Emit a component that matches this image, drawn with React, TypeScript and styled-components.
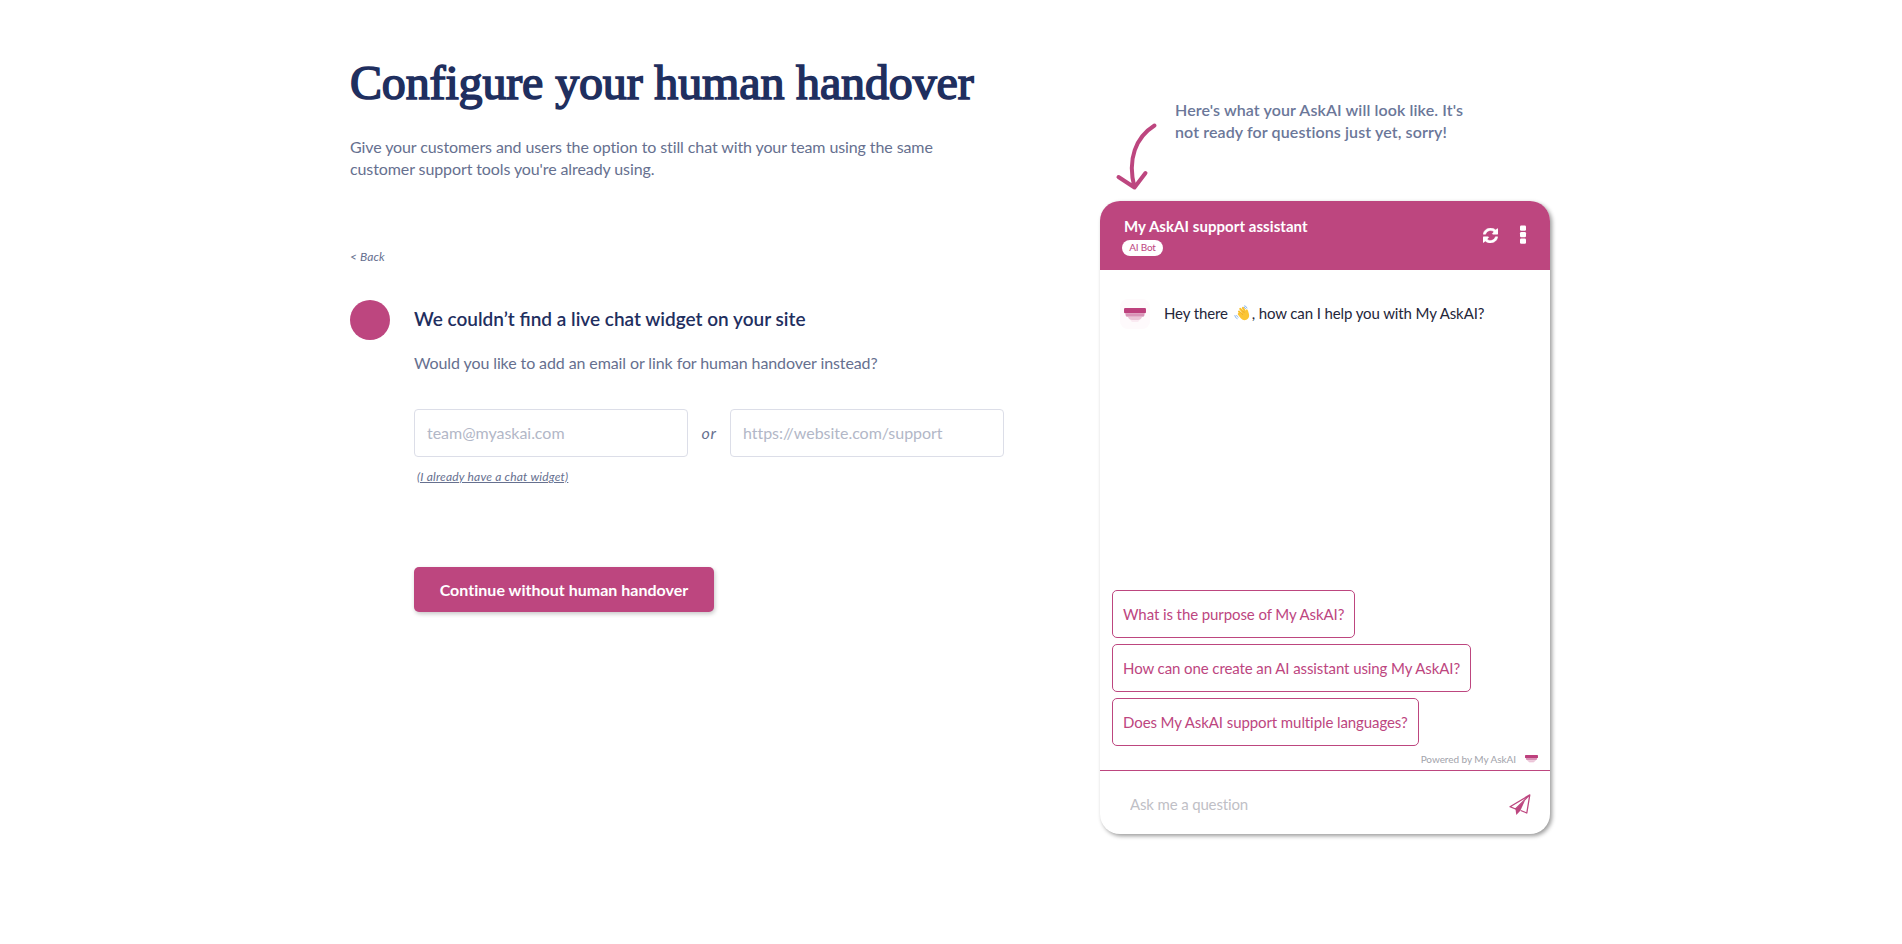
import React from 'react';
import styled, { createGlobalStyle } from 'styled-components';

const pink = '#bd467f';
const navy = '#1f2f5f';
const slate = '#66708f';

const GlobalStyle = createGlobalStyle`
  * { box-sizing: border-box; }
  body {
    margin: 0;
    background: #fff;
    font-family: Lato, "Liberation Sans", sans-serif;
    font-variant-ligatures: none;
    color: ${slate};
  }
  h1, h2, p { margin: 0; }
  button, input { font-family: inherit; font-variant-ligatures: none; }
`;

const Page = styled.main`
  display: flex;
  justify-content: flex-start;
  gap: 96px;
  height: 944px;
  padding: 0 0 0 350px;
  overflow: hidden;
`;

const Setup = styled.section`
  width: 654px;
  padding-top: 52px;
`;

const Title = styled.h1`
  font: 400 48px/62px "Liberation Serif", serif;
  color: ${navy};
  letter-spacing: -0.15px;
  white-space: nowrap;
  -webkit-text-stroke: 1.6px ${navy};
`;

const Lead = styled.p`
  width: 620px;
  margin-top: 22px;
  font-size: 16px;
  line-height: 22px;
  letter-spacing: -0.1px;
`;

const Back = styled.a`
  display: block;
  margin: 68px 0 0 0;
  font-size: 12px;
  line-height: 18px;
  letter-spacing: 0.1px;
  font-style: italic;
`;

const Step = styled.div`
  display: flex;
  gap: 24px;
  margin-top: 34px;
`;

const Dot = styled.div`
  flex: none;
  width: 40px;
  height: 40px;
  border-radius: 50%;
  background: ${pink};
`;

const StepBody = styled.div`
  width: 590px;
`;

const StepTitle = styled.h2`
  font-size: 19px;
  line-height: 38px;
  padding-bottom: 2px;
  font-weight: 600;
  font-variant-ligatures: normal;
  color: ${navy};
`;

const Question = styled.p`
  margin-top: 12px;
  font-size: 16px;
  line-height: 22px;
  letter-spacing: -0.1px;
`;

const Fields = styled.div`
  display: flex;
  justify-content: space-between;
  align-items: center;
  margin-top: 35px;
`;

const Field = styled.input`
  width: 274px;
  height: 48px;
  padding: 0 12px 1px;
  border: 1px solid #dcdee8;
  border-radius: 4px;
  font-size: 16px;
  letter-spacing: -0.03px;
  &::placeholder { color: #b2b7c7; }
`;

const Or = styled.span`
  padding-bottom: 2px;
  font-size: 16px;
  letter-spacing: 0.6px;
  font-style: italic;
`;

const WidgetLink = styled.a`
  display: block;
  margin: 11px 0 0 3px;
  font-size: 12px;
  line-height: 18px;
  letter-spacing: 0.2px;
  font-style: italic;
  text-decoration: underline;
`;

const Continue = styled.button`
  display: block;
  width: 300px;
  height: 45px;
  margin-top: 81px;
  border: 0;
  border-radius: 5px;
  background: ${pink};
  color: #fff;
  font-size: 16px;
  font-weight: 700;
  letter-spacing: 0.02px;
  box-shadow: 1px 2px 4px rgba(0, 0, 0, 0.22);
`;

const Preview = styled.section`
  width: 450px;
  padding-top: 99px;
`;

const Hint = styled.div`
  display: flex;
  height: 102px;
`;

const HintText = styled.p`
  font-size: 16px;
  line-height: 22px;
  font-weight: 600;
  letter-spacing: 0.11px;
  white-space: nowrap;
  color: #6b7799;
`;

const Arrow = styled.svg`
  flex: none;
  width: 75px;
  height: 102px;
`;

const Chat = styled.div`
  display: flex;
  flex-direction: column;
  height: 633px;
  border-radius: 20px;
  overflow: hidden;
  background: #fff;
  box-shadow: 2px 2px 4px rgba(0, 0, 0, 0.4);
`;

const ChatHeader = styled.header`
  display: flex;
  justify-content: space-between;
  height: 69px;
  padding: 14px 21px 0 22px;
  background: ${pink};
  color: #fff;
`;

const BotName = styled.div`
  padding-left: 2px;
  font-size: 15px;
  line-height: 22px;
  font-weight: 700;
  letter-spacing: 0.06px;
`;

const Badge = styled.div`
  width: 41px;
  height: 16px;
  margin-top: 3px;
  border-radius: 8px;
  background: #fff;
  color: ${pink};
  font-size: 10px;
  line-height: 15px;
  letter-spacing: -0.2px;
  text-align: center;
`;

const Actions = styled.div`
  display: flex;
  align-items: center;
  gap: 19px;
  height: 40px;
`;

const Messages = styled.div`
  flex: 1;
  padding: 29px 20px;
`;

const Message = styled.div`
  display: flex;
  align-items: center;
  gap: 14px;
  color: #24263a;
  font-size: 15px;
  line-height: 24px;
`;

const Avatar = styled.div`
  display: flex;
  align-items: center;
  justify-content: center;
  width: 30px;
  height: 30px;
  padding-top: 2px;
  border-radius: 8px;
  background: #fefafc;
`;

const Greeting = styled.p`
  display: flex;
  align-items: center;
  white-space: pre;
  padding-bottom: 2px;
  letter-spacing: -0.11px;
`;

const Suggestions = styled.div`
  display: flex;
  flex-direction: column;
  align-items: flex-start;
  gap: 6px;
  padding: 0 12px;
`;

const Suggestion = styled.button`
  height: 48px;
  padding: 0 10px;
  border: 1px solid ${pink};
  border-radius: 5px;
  background: #fff;
  color: ${pink};
  font-size: 15px;
  letter-spacing: -0.09px;
`;

const Powered = styled.div`
  display: flex;
  justify-content: flex-end;
  align-items: center;
  gap: 9px;
  height: 24px;
  padding: 2px 12px 0 0;
  color: #a2a3ab;
  font-size: 10px;
  letter-spacing: -0.05px;
`;

const Composer = styled.div`
  display: flex;
  align-items: center;
  justify-content: space-between;
  height: 64px;
  padding: 4px 19px 0 30px;
  border-top: 1px solid ${pink};
`;

const Ask = styled.input`
  width: 300px;
  padding: 0 0 2px;
  border: 0;
  font-size: 15px;
  letter-spacing: -0.15px;
  &::placeholder { color: #bfc0c6; }
`;

const LogoMark = ({ width }: { width: number }) => (
  <svg width={width} height={width * 0.68} viewBox="0 0 22 15">
    <rect x="0" y="0" width="22" height="5.2" rx="1" fill="#bd407d" />
    <path d="M1.500 5.200H20.500V7Q20.500 8.900 18 8.900H4Q1.500 8.900 1.500 7Z" fill="#d993b7" />
    <path d="M4 8.900H18Q17.500 12 14 12H8Q4.500 12 4 8.900Z" fill="#ebc4d7" />
    <path d="M6.500 12H15.500Q14 15 11 15Q8 15 6.500 12Z" fill="#faeaf2" />
  </svg>
);

const Refresh = () => (
  <svg width="15" height="15" viewBox="128 128 1536 1536" fill="#fff" stroke="#fff" strokeWidth="50">
    <path d="M1639 1056q0 5-1 7-64 268-268 434.500t-478 166.500q-146 0-282.500-55t-243.500-157l-129 129q-19 19-45 19t-45-19-19-45v-448q0-26 19-45t45-19h448q26 0 45 19t19 45-19 45l-137 137q71 66 161 102t187 36q134 0 250-65t186-179q11-17 53-117 8-23 30-23h192q13 0 22.500 9.500t9.500 22.500zm25-800v448q0 26-19 45t-45 19h-448q-26 0-45-19t-19-45 19-45l138-138q-148-137-349-137-134 0-250 65t-186 179q-11 17-53 117-8 23-30 23h-199q-13 0-22.500-9.500t-9.500-22.500v-7q65-268 270-434.500t480-166.500q146 0 284 55.500t245 156.500l130-129q19-19 45-19t45 19 19 45z" />
  </svg>
);

const Dots = () => (
  <svg width="12" height="20" viewBox="0 0 12 20" fill="#fff">
    {[0.5, 7, 13.5].map((y) => (
      <rect key={y} x="3" y={y} width="6" height="5.2" rx="1.2" />
    ))}
  </svg>
);

const Wave = () => (
  <svg width="20" height="16" viewBox="-2 0 20 16">
    <g stroke="#f9c02e" strokeWidth="2.1" strokeLinecap="round">
      <path d="M5 6.5L9 11M6.300 3.800L10.500 9M8.900 2.900L12 8M4.800 9L8 12" />
    </g>
    <path d="M6 8L11.500 6.500L12.300 4.200Q13.800 4.100 14 5.800L15 9.200Q15.800 13 12.400 14.800Q9.300 16 7 13.400L4.600 10.500Z" fill="#fbc535" />
    <path d="M8.300 5.500L10.500 8M6.800 7.500L9 10" stroke="#e3952b" strokeWidth=".5" />
    <path d="M10.500 .8Q12.500 1 13 3M10.200 2.200Q11.200 2.500 11.600 3.700M.8 10.500Q1 13 3.200 13.700M2.600 10.500Q3 11.800 4.100 12.200" fill="none" stroke="#8db8ef" strokeWidth="1" strokeLinecap="round" />
  </svg>
);

const Send = () => (
  <svg width="22" height="22" viewBox="0 0 22 22" fill="none" stroke={pink} strokeWidth="1.300" strokeLinejoin="round">
    <path d="M20.800 .9L1 12.700L6.500 15L20.800 .9L17.800 19L11.700 16.500" />
    <path d="M6.500 15L16 6.500L11.300 16.700L7.300 21Z" fill={pink} stroke="none" />
  </svg>
);

const suggestions = [
  'What is the purpose of My AskAI?',
  'How can one create an AI assistant using My AskAI?',
  'Does My AskAI support multiple languages?',
];

export default function App() {
  return (
    <Page>
      <GlobalStyle />
      <Setup>
        <Title>Configure your human handover</Title>
        <Lead>
          Give your customers and users the option to still chat with your team using the same
          <br />
          customer support tools you're already using.
        </Lead>
        <Back>&lt; Back</Back>
        <Step>
          <Dot />
          <StepBody>
            <StepTitle>We couldn’t find a live chat widget on your site</StepTitle>
            <Question>Would you like to add an email or link for human handover instead?</Question>
            <Fields>
              <Field placeholder="team@myaskai.com" />
              <Or>or</Or>
              <Field placeholder="https://website.com/support" />
            </Fields>
            <WidgetLink>(I already have a chat widget)</WidgetLink>
            <Continue>Continue without human handover</Continue>
          </StepBody>
        </Step>
      </Setup>
      <Preview>
        <Hint>
          <Arrow viewBox="0 0 75 102" fill="none" stroke={pink} strokeWidth="4" strokeLinecap="round" strokeLinejoin="round">
            <path d="M54.500 26.500C36 38 27 60 34.500 88.500M18.500 78L34.500 88.500L45.500 74" />
          </Arrow>
          <HintText>
            Here's what your AskAI will look like. It's
            <br />
            not ready for questions just yet, sorry!
          </HintText>
        </Hint>
        <Chat>
          <ChatHeader>
            <div>
              <BotName>My AskAI support assistant</BotName>
              <Badge>AI Bot</Badge>
            </div>
            <Actions>
              <Refresh />
              <Dots />
            </Actions>
          </ChatHeader>
          <Messages>
            <Message>
              <Avatar>
                <LogoMark width={22} />
              </Avatar>
              <Greeting>
                Hey there <Wave />, how can I help you with My AskAI?
              </Greeting>
            </Message>
          </Messages>
          <Suggestions>
            {suggestions.map((text) => (
              <Suggestion key={text}>{text}</Suggestion>
            ))}
          </Suggestions>
          <Powered>
            Powered by My AskAI
            <LogoMark width={13} />
          </Powered>
          <Composer>
            <Ask placeholder="Ask me a question" />
            <Send />
          </Composer>
        </Chat>
      </Preview>
    </Page>
  );
}
